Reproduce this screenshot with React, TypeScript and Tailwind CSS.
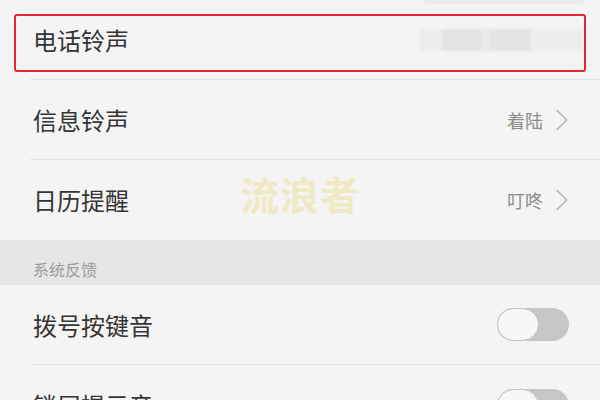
import { ReactNode } from "react";

const font = { fontFamily: '"Noto Sans CJK SC", "Noto Sans", sans-serif' };

const Chevron = () => (
  <svg width="14" height="22" viewBox="0 0 14 22" fill="none" className="ml-[12px]">
    <path d="M2 1.5 L12 11 L2 20.5" stroke="#b4b4b4" strokeWidth="1.4" strokeLinecap="round" strokeLinejoin="round" />
  </svg>
);

const Toggle = () => (
  <div className="relative h-[33px] w-[72px] rounded-full bg-[#c6c6c6]">
    <div className="absolute left-0 top-0 h-[33px] w-[42px] rounded-full border-[1.5px] border-[#c2c2c2] bg-[#f7f7f7]" />
  </div>
);

const Row = ({
  label,
  right,
  last = false,
  children
}: {
  label: string;
  right?: ReactNode;
  last?: boolean;
  children?: ReactNode;
}) => (
  <div className="relative">
    <div
      className={`ml-[30px] flex h-[80px] items-center justify-between pl-[3px] pr-[31px] ${
        last ? "" : "border-b border-[#e3e3e3]"
      }`}
    >
      <span className="text-[24px] leading-none text-[#353535]">{label}</span>
      {right}
    </div>
    {children}
  </div>
);

const ValueWithChevron = ({ text }: { text: string }) => (
  <div className="flex items-center">
    <span className="text-[18px] leading-none text-[#8c8c8c]">{text}</span>
    <Chevron />
  </div>
);

const BlurredValue = () => (
  <div className="flex h-[22px] w-[163px] mr-[-14px] blur-[1.5px]">
    <div className="w-[22px] bg-[#ececec]" />
    <div className="w-[40px] bg-[#e3e3e3]" />
    <div className="w-[8px] bg-[#eaeaea]" />
    <div className="w-[40px] bg-[#e4e4e4]" />
    <div className="flex-1 bg-[#ededed]" />
  </div>
);

export default function App() {
  return (
    <div className="relative h-[400px] w-[600px] overflow-hidden bg-[#f4f4f4]" style={font}>
      <div className="absolute left-[423px] top-0 h-[4px] w-[162px] rounded-b bg-[#e8e8e8] blur-[1px]" />

      <Row label="电话铃声" right={<BlurredValue />}>
        <div className="pointer-events-none absolute left-[14px] top-[14px] h-[58px] w-[572px] rounded-[3px] border-2 border-[#e12a30]" />
      </Row>
      <Row label="信息铃声" right={<ValueWithChevron text="着陆" />} />
      <Row label="日历提醒" right={<ValueWithChevron text="叮咚" />} last>
        <div className="pointer-events-none absolute left-[240px] top-[14px] text-[39px] font-bold leading-none tracking-[1px] text-[#f0eac4]">
          流浪者
        </div>
      </Row>

      <div className="flex h-[45px] items-center bg-[#e6e6e6] pl-[33px] pt-[12px]">
        <span className="text-[16px] leading-none text-[#9b9b9b]">系统反馈</span>
      </div>

      <Row label="拨号按键音" right={<Toggle />} />
      <Row label="锁屏提示音" right={<Toggle />} last />
    </div>
  );
}
